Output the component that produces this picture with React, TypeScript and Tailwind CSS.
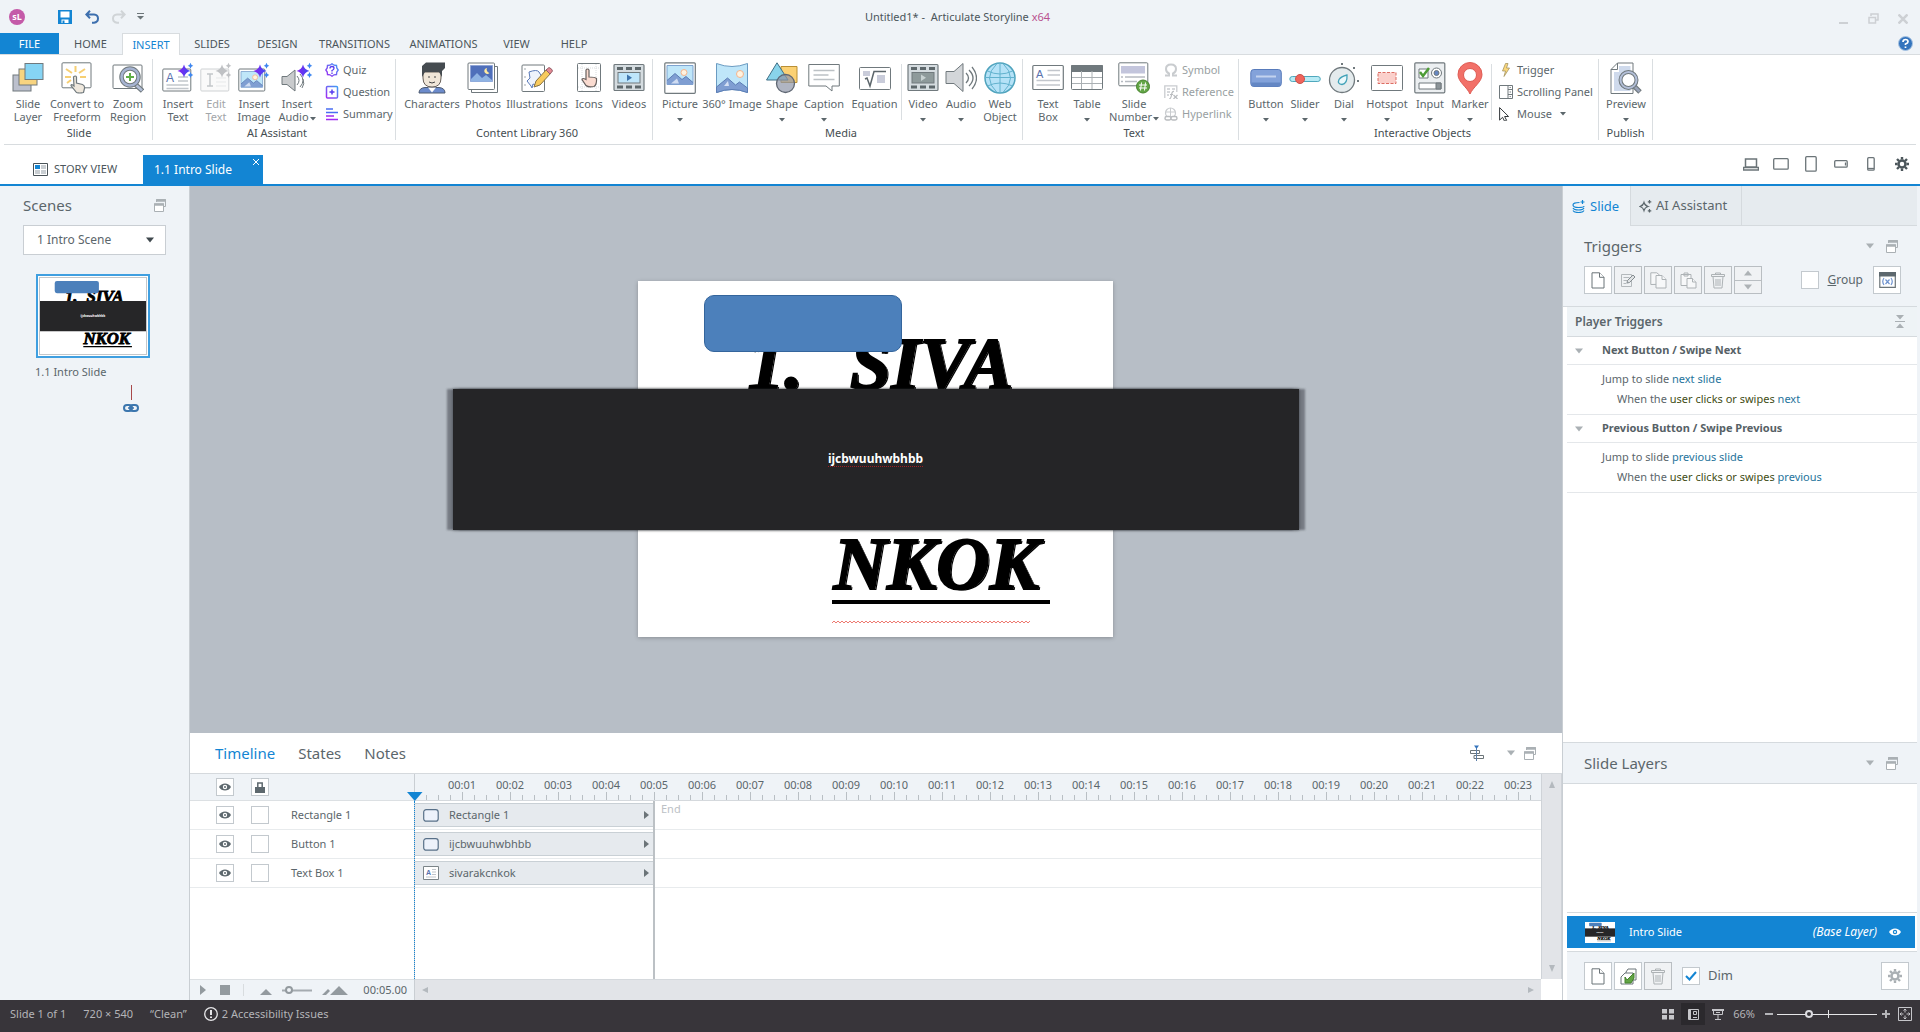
import type { ReactNode } from 'react';
import clsx from 'clsx';

type Tool = { label: string; label2?: string; w: string; icon: ReactNode; menu?: boolean; disabled?: boolean };
type SmallTool = { label: string; icon: ReactNode; menu?: boolean; disabled?: boolean };

const G = '#70797d';

/* ---------- shared glyphs ---------- */

const Caret = ({ className = '' }: { className?: string }) => (
  <svg className={className} width="6" height="4" viewBox="0 0 6 4"><path d="M0 0h6L3 3.6z" fill="currentColor" /></svg>
);

const Arrow = ({ className = '' }: { className?: string }) => (
  <svg className={className} width="8" height="6" viewBox="0 0 8 6"><path d="M0 .5h8L4 5.5z" fill="currentColor" /></svg>
);

const Undock = () => (
  <svg width="12" height="13" viewBox="0 0 12 13" fill="none" stroke="#aab0b4">
    <path d="M2.500 3V.5h9v7H10" />
    <path d="M2 1.500h10" strokeWidth="2.500" />
    <path d="M.5 5h9v7.500h-9z" fill="#fff" />
    <path d="M0 5.500h10" strokeWidth="2.500" />
  </svg>
);

const Eye = ({ color = '#5d686e', pupil = '#fff' }: { color?: string; pupil?: string }) => (
  <svg width="12" height="8" viewBox="0 0 12 8">
    <path d="M0 4C2.500-.8 9.500-.8 12 4 9.500 8.800 2.500 8.800 0 4z" fill={color} />
    <circle cx="6" cy="4" r="2.200" fill={pupil} />
    <circle cx="6" cy="4" r="1" fill={color} />
  </svg>
);

const Page = () => (
  <svg width="14" height="17" viewBox="0 0 14 17" fill="#fff" stroke="#6b7478">
    <path d="M1 .8h7.500L13 5.300V16H1z" /><path d="M8.500.8v4.500H13" />
  </svg>
);

const Trash = () => (
  <svg width="14" height="17" viewBox="0 0 14 17" fill="none" stroke="#adb2b5">
    <path d="M4.500 2.500V1h5v1.500M.5 2.500h13v2H.5zM2 4.500L3 16h8l1-11.500" />
    <path d="M5 7v7M7 7v7M9 7v7" />
  </svg>
);

const Spark = ({ muted = false }: { muted?: boolean }) => (
  <g fill={muted ? '#bfc1c4' : 'url(#aiGrad)'} stroke="none">
    <path d="M22 2.500q1.300 5.200 6.500 6.500-5.200 1.200-6.500 6.500-1.300-5.300-6.500-6.500 5.200-1.300 6.500-6.500z" />
    <path d="M28.500.8q.5 2.500 2.800 3-2.300.5-2.800 3-.5-2.500-2.800-3 2.300-.5 2.800-3z" fill={muted ? undefined : '#3d86f0'} />
    <path d="M28.500 10q.5 2.500 2.800 3-2.300.5-2.800 3-.5-2.500-2.800-3 2.300-.5 2.800-3z" fill={muted ? undefined : '#3d86f0'} />
  </g>
);

const Landscape = () => (
  <>
    <path d="M0 0h26v19H0z" fill="#bfe6f9" stroke="#7fa3cf" />
    <circle cx="17" cy="7" r="3" fill="#fff3e0" stroke="#f5b48c" />
    <path d="M0 15l8-7 7 6 4-3 7 6v2H0z" fill="#7f9ed2" stroke="none" />
    <path d="M4 18l6-5 2 5z" fill="#cfdcf2" stroke="none" />
    <path d="M0 15l8-7 7 6 4-3 7 6" fill="none" stroke="#5c7db5" />
  </>
);

const Icon = ({ children }: { children: ReactNode }) => (
  <svg width="32" height="32" viewBox="0 0 32 32" fill="none" stroke={G} className="shrink-0">{children}</svg>
);

const Film = ({ screen, play }: { screen: string; play: string }) => (
  <Icon>
    <rect x="1" y="2.500" width="30" height="26" rx="1" fill="#d5dce0" strokeWidth="1.200" />
    <path d="M4 6.500h6M13 6.500h6M22 6.500h6M4 25h6M13 25h6M22 25h6" stroke="#5e686c" strokeWidth="3" />
    <rect x="5" y="10.500" width="22" height="10.500" fill={screen} />
    <path d="M14 12.500l5 3.200-5 3.200z" fill={play} stroke="none" />
  </Icon>
);

/* ---------- ribbon icons ---------- */

const icons = {
  slideLayer: (
    <Icon>
      <rect x="1" y="13" width="18" height="16" fill="#bcc0cd" />
      <rect x="7" y="7" width="18" height="16" fill="#f8d480" />
      <rect x="13" y="1.500" width="18" height="16" fill="#86d4f4" />
    </Icon>
  ),
  freeform: (
    <Icon>
      <rect x="1" y=".8" width="29" height="25" rx="1" fill="#fff" />
      <path d="M14.500 4v6M5 7l6 4M24 7l-6 4M4 15h6M25 15h-6M6 21l4-3" stroke="#f6cf73" strokeWidth="2" />
      <path d="M12.500 15q2-2 3 0v6l6 1.500q2.500 1 2 4l-1 4q-4 1-7 0l-5.500-7q0-2 3 .5z" fill="#efe8dd" strokeWidth="1.200" />
    </Icon>
  ),
  zoom: (
    <Icon>
      <rect x="1" y="3" width="29" height="23.500" rx="1" fill="#fff" />
      <path d="M23.500 22.500l7 6.500" strokeWidth="5" /><path d="M24 23l6 5.500" stroke="#b3bfd8" strokeWidth="2.500" />
      <circle cx="18" cy="15" r="8.500" fill="#fff" stroke={G} strokeWidth="4.500" />
      <circle cx="18" cy="15" r="8.500" stroke="#a6b4d2" strokeWidth="2.500" />
      <path d="M18 11v8M14 15h8" stroke="#5fae46" strokeWidth="2" />
    </Icon>
  ),
  insertText: (
    <Icon>
      <rect x=".8" y="7" width="28" height="22" rx="1" fill="#fff" />
      <path d="M16 15h10M16 19h10M4.500 23h22M4.500 26.500h22" stroke="#c2c7cc" strokeWidth="1.500" />
      <text x="4" y="20" fontFamily="Liberation Sans" fontSize="12" fill="#5a72ad" stroke="none">A</text>
      <Spark />
    </Icon>
  ),
  editText: (
    <Icon>
      <rect x=".8" y="7" width="28" height="22" rx="1" fill="#fafafa" stroke="#cfd2d4" />
      <path d="M7 12h6M7 24h6M10 12v12" stroke="#c4c7ca" strokeWidth="1.500" />
      <path d="M16 16h10M16 20h10M16 24h10" stroke="#e7e9ea" />
      <Spark muted />
    </Icon>
  ),
  insertImage: (
    <Icon>
      <rect x=".8" y="7" width="26" height="22" rx="1" fill="#fff" />
      <g transform="translate(3 9.500) scale(.83)"><Landscape /></g>
      <Spark />
    </Icon>
  ),
  insertAudio: (
    <Icon>
      <path d="M1 14.500h5l8-6.500v21l-8-6.500H1z" fill="#c9cbcd" />
      <path d="M16 14q4 4.500 0 9M19 12q6 6.500 0 13M22 17q2 5-1 9" />
      <Spark />
    </Icon>
  ),
  character: (
    <Icon>
      <path d="M3 31q0-5 6-5.500h14q6 .5 6 5.500z" fill="#6c8bcb" stroke="#4d5a70" />
      <path d="M12 25.500l4 5 4-5z" fill="#fff" stroke="none" />
      <path d="M7 10h18v6q0 9-9 9t-9-9z" fill="#f0e6d8" stroke="#665e58" />
      <path d="M6 15V4l4-3.500h19V6l-3 3v6l-3-5H9z" fill="#454b50" stroke="none" />
      <path d="M12 15h2M18 15h2M13 20q3 2 6 0" stroke="#444" />
    </Icon>
  ),
  photos: (
    <Icon>
      <path d="M4.500 26.500v4h26v-26h-3" fill="#fff" />
      <rect x="1" y="1" width="26.500" height="26.500" rx="1" fill="#fff" />
      <path d="M3.500 3.500h22v16h-22z" fill="#4f6fba" stroke="#8fa4d6" />
      <path d="M4 17l6-6 5 5 4-3 6 5v1.500H4z" fill="#8fb3e3" stroke="none" />
      <path d="M20 6a3 3 0 1 0 2.500 5A3.500 3.500 0 0 1 20 6z" fill="#ffeaa0" stroke="none" />
    </Icon>
  ),
  illustrations: (
    <Icon>
      <rect x="1" y="3" width="22.500" height="26.500" rx="1" fill="#fff" />
      <path d="M3 7h2M3 15h2M3 23h2" stroke="#a0a7ab" />
      <path d="M10 24l-4-5 3-3-1-6q8-3 10 0l3 5-4 9-5-2-1 4z" fill="#eef3fc" stroke="#5a7ab8" />
      <path d="M13 25l2-6L26 7l4 4-11 12z" fill="#f8ca5c" stroke="#8b7444" />
      <path d="M25 8l3-2.500q3 1 3.500 3.500L29 12z" fill="#e58a94" stroke="#96606a" />
    </Icon>
  ),
  hand: (
    <Icon>
      <rect x="4.500" y="1.500" width="23" height="28" rx="1" fill="#fff" />
      <path d="M9 2v27M23 2v27M5 6h22M5 25h22" stroke="#d9dcde" strokeDasharray="1 1" />
      <path d="M13 8q1.500-2 3 0v7q6 0 7.500 1.500.5 6-2.500 8-6 1-8-1l-4-6q0-2 4 0z" fill="#fadbd0" stroke="#67605e" strokeWidth="1.200" />
    </Icon>
  ),
  videos: <Film screen="#bfe6fb" play="#3e74ad" />,
  picture: (
    <Icon>
      <rect x=".8" y=".8" width="30.500" height="30.500" rx="1" fill="#fff" strokeWidth="1.200" />
      <g transform="translate(3 3.500)"><Landscape /></g>
    </Icon>
  ),
  panorama: (
    <Icon>
      <path d="M.5 1.500q15.500 6 31 0v29q-15.500-6-31 0z" fill="#bfe6f9" stroke="#6a9bc2" />
      <circle cx="24" cy="12" r="3.500" fill="#fff3e0" stroke="#f5b48c" />
      <path d="M.5 25l11-9 8 7 4-3 8 6v4.500q-15.500-6-31 0z" fill="#7f9ed2" stroke="#5c7db5" />
      <path d="M8 24l4-5 1 5z" fill="#d4e0f4" stroke="none" />
    </Icon>
  ),
  shape: (
    <Icon>
      <path d="M15 4.500h16v16H15z" fill="#fbd173" stroke="#b98f35" />
      <path d="M11 .8L22 18H.5z" fill="#7ccfe9" fillOpacity=".9" stroke="#3f6f86" />
      <circle cx="19.500" cy="21.500" r="9" fill="#8e96a8" fillOpacity=".7" stroke="#5e6672" strokeWidth="1.300" />
    </Icon>
  ),
  caption: (
    <Icon>
      <path d="M.8 2.500h30.500V24H24v5l-6-5H.8z" fill="#fff" />
      <path d="M5.500 8.500h21M5.500 13h15M5.500 17.500h21" stroke="#bcc1c5" strokeWidth="1.500" />
    </Icon>
  ),
  equation: (
    <Icon>
      <rect x=".5" y="5.500" width="31" height="22" rx="1" fill="#fff" />
      <path d="M4 9h7v5H4zM18 13h8v8h-8z" fill="#c9ccda" stroke="none" />
      <path d="M6 17l2-1 3 8 4-14.500h12" stroke="#5c666b" strokeWidth="1.500" />
    </Icon>
  ),
  video: <Film screen="#8e9a9b" play="#c8d2d2" />,
  audio: (
    <Icon>
      <path d="M1 9.500h8L18 1.500v28L9 21.500H1z" fill="#d3d6d9" />
      <path d="M21 11q5 5 0 10M24 8q8 8 0 16M27 5q9 11 0 22" strokeWidth="1.300" />
    </Icon>
  ),
  web: (
    <Icon>
      <circle cx="16" cy="16" r="15" fill="#b5e2f7" stroke="#4fa3bd" strokeWidth="1.500" />
      <path d="M16 1v30M1 15.500h30M3.500 9q12.500 6 25 0M3.500 24q12.500-6 25 0M13 1.500Q-2 16 13 30.500M19 1.500Q34 16 19 30.500" stroke="#62b2ce" />
    </Icon>
  ),
  textBox: (
    <Icon>
      <rect x=".8" y="3.500" width="30.500" height="24" rx="1" fill="#fff" strokeWidth="1.200" />
      <path d="M15.500 8.500H28M15.500 13H28M4.500 18.500H28M4.500 23H28" stroke="#c2c6cc" strokeWidth="1.500" />
      <text x="4" y="15.500" fontFamily="Liberation Sans" fontSize="11" fill="#5a72ad" stroke="none">A</text>
    </Icon>
  ),
  table: (
    <Icon>
      <rect x=".5" y="3.500" width="31" height="24" rx="1" fill="#fff" />
      <path d="M.5 3.500h31v6H.5z" fill={G} />
      <path d="M10.500 9v18M21 9v18M1 15.500h30M1 21.500h30" stroke="#aab0b3" />
    </Icon>
  ),
  slideNumber: (
    <Icon>
      <rect x=".8" y=".8" width="29" height="23" rx="1" fill="#fff" />
      <path d="M3 4h24v7.500H3z" fill="#c3c5dc" stroke="none" />
      <path d="M3 15h2M7 15h20M3 19.500h2M7 19.500h12" stroke="#b6bbc1" strokeWidth="1.500" />
      <circle cx="25" cy="24.500" r="6.500" fill="#62a545" stroke="#45822c" />
      <path d="M23.500 20.500l-1 8M27.500 20.500l-1 8M21 23h8M21 26h8" stroke="#fff" />
    </Icon>
  ),
  button: (
    <Icon>
      <rect x=".8" y="7.500" width="30.500" height="17" rx="3" fill="#83a2da" stroke="#587bbb" />
      <path d="M1.500 20.500h29v2q0 2-2 2h-25q-2 0-2-2z" fill="#6487c4" stroke="none" />
      <path d="M6 14.500h20" stroke="#c3d3ef" strokeWidth="2" />
    </Icon>
  ),
  slider: (
    <Icon>
      <rect x=".8" y="14.500" width="30.500" height="5" rx="2.500" fill="#b8ebf5" stroke="#4fa8bd" />
      <circle cx="11" cy="17" r="4.500" fill="#f0645c" stroke="#c9534c" />
    </Icon>
  ),
  dial: (
    <Icon>
      <circle cx="14" cy="18" r="12.500" fill="#e4ebed" strokeWidth="1.300" />
      <path d="M19 13q.5 9-5 9.500-5-.5-3-5 2-3 8-4.500z" fill="#e9f8fb" stroke="#41a2b8" strokeWidth="1.300" />
      <path d="M13 1h2v2h-2zM25 5h2v2h-2zM29 18h2v2h-2z" fill={G} stroke="none" />
    </Icon>
  ),
  hotspot: (
    <Icon>
      <rect x=".5" y="3.500" width="31" height="25" rx="1" fill="#fff" />
      <path d="M7 10.500h18v11H7z" fill="#fbd0cb" stroke="#dc6d63" strokeDasharray="3 1.500" />
    </Icon>
  ),
  input: (
    <Icon>
      <rect x=".8" y=".8" width="30" height="30" rx="1" fill="#eceff1" strokeWidth="1.200" />
      <path d="M5 7h9v9H5zM5 21h22v6H5z" fill="#fff" />
      <path d="M22 21h5v6h-5z" fill="#8d9599" />
      <path d="M6 10l3 4 6-8" stroke="#4d9c35" strokeWidth="2.500" />
      <circle cx="22.500" cy="11" r="5" fill="#fff" /><circle cx="22.500" cy="11" r="2.500" fill="#6787c2" />
    </Icon>
  ),
  marker: (
    <Icon>
      <path d="M16 32C13 25 4 20 4 12.500a12 12 0 0 1 24 0C28 20 19 25 16 32z" fill="#f27068" stroke="#de5b53" />
      <circle cx="16" cy="13" r="6.500" fill="#fff" stroke="#de5b53" />
    </Icon>
  ),
  preview: (
    <Icon>
      <path d="M1 7.500L7.500 1H23v30.500H1z" fill="#fff" />
      <path d="M4 10h5V4h11.500v25H4z" fill="#cfdaec" stroke="none" />
      <path d="M1 7.500h6.500V1" />
      <path d="M24 24l6 6" strokeWidth="5" /><path d="M24.500 24.500l5 5" stroke="#9aa3b8" strokeWidth="2.500" />
      <circle cx="18.500" cy="18" r="8" fill="#fff" strokeWidth="4" />
      <circle cx="18.500" cy="18" r="8" stroke="#b3bfd8" strokeWidth="2" />
    </Icon>
  ),
};

const Mini = ({ children }: { children: ReactNode }) => (
  <svg width="14" height="14" viewBox="0 0 14 14" fill="none" stroke={G} className="shrink-0">{children}</svg>
);

const mini = {
  quiz: (
    <Mini>
      <path d="M7 .8l2 1.400 2.500.3.300 2.500L13.200 7l-1.400 2-.3 2.500-2.500.3-2 1.400-2-1.400-2.500-.3-.3-2.500L.8 7l1.400-2 .3-2.500L5 2.200z" stroke="url(#aiGradLine)" strokeWidth="1.400" />
      <path d="M5 5.500q0-2 2-2t2 1.700Q9 6.500 7 7.500v1M7 9.500V11" stroke="#5a3cf0" strokeWidth="1.300" />
    </Mini>
  ),
  question: (
    <Mini>
      <rect x="1.500" y="1.500" width="11" height="11.500" rx="1" stroke="url(#aiGradLine)" strokeWidth="1.500" />
      <path d="M7 4.500v5M4.500 7h5" stroke="#5a3cf0" strokeWidth="1.500" />
    </Mini>
  ),
  summary: (
    <Mini>
      <path d="M1 2h7M1 5.500h12" stroke="#4a6df2" strokeWidth="1.600" />
      <path d="M1 9h8M1 12.500h12" stroke="#a02af2" strokeWidth="1.600" />
    </Mini>
  ),
  symbol: (
    <Mini><path d="M1 12.500h4v-2Q2 9 2 6q0-4.500 5-4.500T12 6q0 3-3 4.500v2h4" stroke="#c9cccf" strokeWidth="2" /></Mini>
  ),
  reference: (
    <Mini>
      <path d="M.8 13V.8h12V7M3 4h3M3 7h3M3 10h2M8 4h3" stroke="#c9cccf" strokeWidth="1.300" />
      <path d="M5 14q2 0 2.500-4T10 6.500M6 9.500h3M9.500 10l4 4M13.500 10l-4 4" stroke="#b9bcbf" strokeWidth="1.200" />
    </Mini>
  ),
  hyperlink: (
    <Mini>
      <circle cx="6.500" cy="6" r="5" stroke="#c9cccf" strokeWidth="1.200" /><path d="M6.500 1v8M1.500 5h10" stroke="#c9cccf" />
      <rect x="1" y="9.500" width="6" height="3.500" rx="1.700" fill="#fff" stroke="#b9bcbf" strokeWidth="1.400" />
      <rect x="7" y="9.500" width="6" height="3.500" rx="1.700" fill="#fff" stroke="#b9bcbf" strokeWidth="1.400" />
    </Mini>
  ),
  trigger: <Mini><path d="M6.500.5h2.500L7.500 5h3L5 13.500 6.500 8H3.500z" fill="#fbd77a" stroke="#a59562" strokeWidth=".8" /></Mini>,
  scroll: (
    <Mini>
      <path d="M.5.5h13v13H.5zM9 .5v13M9 4.500h4M9 9.500h4" />
      <path d="M10.200 3l1-1.200 1 1.200zM10.200 11l1 1.200 1-1.200z" fill={G} stroke="none" />
      <path d="M10.500 7h1.500" />
    </Mini>
  ),
  mouse: <Mini><path d="M.6.600v12.500l3-2.800 2 4 2-1-2-3.800h4z" fill="#fff" stroke="#33383b" /></Mini>,
};

/* ---------- ribbon ---------- */

const RibbonButton = ({ label, label2, w, icon, menu, disabled }: Tool) => (
  <button
    className={clsx('flex h-full shrink-0 flex-col items-center pt-[7px]', w, disabled ? 'text-[#a2a6a9]' : 'text-[#5b666b]')}
    disabled={disabled}
  >
    {icon}
    <span className="mt-[3px] flex flex-col items-center whitespace-nowrap text-[11px] leading-[13px]">
      <span>{label}</span>
      {label2 ? (
        <span className="flex items-center gap-px">
          {label2}
          {menu && <Caret className="mt-1" />}
        </span>
      ) : (
        menu && <Caret className="mt-2" />
      )}
    </span>
  </button>
);

const SmallList = ({ items, pad }: { items: SmallTool[]; pad: string }) => (
  <div className={clsx('flex flex-col pt-1', pad)}>
    {items.map((it) => (
      <button
        key={it.label}
        disabled={it.disabled}
        className={clsx('flex h-[22px] items-center gap-1 whitespace-nowrap text-[11px]', it.disabled ? 'text-[#999fa2]' : 'text-[#5b666b]')}
      >
        {it.icon}
        {it.label}
        {it.menu && <Caret className="ml-1" />}
      </button>
    ))}
  </div>
);

const Group = ({ title, w, children }: { title: string; w: string; children: ReactNode }) => (
  <section className={clsx('my-1 flex shrink-0 flex-col border-r border-[#dadee1]', w)}>
    <div className="-mt-1 flex h-[72px]">{children}</div>
    <h2 className="text-center text-[11px] leading-[14px] text-[#454d51]">{title}</h2>
  </section>
);

const Buttons = ({ items }: { items: Tool[] }) => (
  <>{items.map((t) => <RibbonButton key={t.label + t.label2} {...t} />)}</>
);

const InnerRule = () => <div className="mt-[9px] h-[56px] w-px shrink-0 bg-[#dadee1]" />;

const slideTools: Tool[] = [
  { label: 'Slide', label2: 'Layer', w: 'w-[44px]', icon: icons.slideLayer },
  { label: 'Convert to', label2: 'Freeform', w: 'w-[54px]', icon: icons.freeform },
  { label: 'Zoom', label2: 'Region', w: 'w-[48px]', icon: icons.zoom },
];
const aiTools: Tool[] = [
  { label: 'Insert', label2: 'Text', w: 'w-[38px]', icon: icons.insertText },
  { label: 'Edit', label2: 'Text', w: 'w-[38px]', icon: icons.editText, disabled: true },
  { label: 'Insert', label2: 'Image', w: 'w-[38px]', icon: icons.insertImage },
  { label: 'Insert', label2: 'Audio', w: 'w-[48px]', icon: icons.insertAudio, menu: true },
];
const libraryTools: Tool[] = [
  { label: 'Characters', w: 'w-[60px]', icon: icons.character },
  { label: 'Photos', w: 'w-[42px]', icon: icons.photos },
  { label: 'Illustrations', w: 'w-[66px]', icon: icons.illustrations },
  { label: 'Icons', w: 'w-[38px]', icon: icons.hand },
  { label: 'Videos', w: 'w-[42px]', icon: icons.videos },
];
const mediaTools: Tool[] = [
  { label: 'Picture', w: 'w-[40px]', icon: icons.picture, menu: true },
  { label: '360° Image', w: 'w-[64px]', icon: icons.panorama },
  { label: 'Shape', w: 'w-[36px]', icon: icons.shape, menu: true },
  { label: 'Caption', w: 'w-[48px]', icon: icons.caption, menu: true },
  { label: 'Equation', w: 'w-[53px]', icon: icons.equation },
];
const avTools: Tool[] = [
  { label: 'Video', w: 'w-[42px]', icon: icons.video, menu: true },
  { label: 'Audio', w: 'w-[34px]', icon: icons.audio, menu: true },
  { label: 'Web', label2: 'Object', w: 'w-[44px]', icon: icons.web },
];
const textTools: Tool[] = [
  { label: 'Text', label2: 'Box', w: 'w-[36px]', icon: icons.textBox },
  { label: 'Table', w: 'w-[42px]', icon: icons.table, menu: true },
  { label: 'Slide', label2: 'Number', w: 'w-[52px]', icon: icons.slideNumber, menu: true },
];
const objectTools: Tool[] = [
  { label: 'Button', w: 'w-[38px]', icon: icons.button, menu: true },
  { label: 'Slider', w: 'w-[40px]', icon: icons.slider, menu: true },
  { label: 'Dial', w: 'w-[38px]', icon: icons.dial, menu: true },
  { label: 'Hotspot', w: 'w-[48px]', icon: icons.hotspot, menu: true },
  { label: 'Input', w: 'w-[38px]', icon: icons.input, menu: true },
  { label: 'Marker', w: 'w-[42px]', icon: icons.marker, menu: true },
];

const Ribbon = () => (
  <div className="mx-1 flex h-[90px] shrink-0 overflow-hidden border-b border-[#d8dcdf] bg-white">
    <Group title="Slide" w="w-[149px] pl-[2px]"><Buttons items={slideTools} /></Group>
    <Group title="AI Assistant" w="w-[243px] pl-[6px]">
      <Buttons items={aiTools} />
      <SmallList pad="pl-1" items={[
        { label: 'Quiz', icon: mini.quiz },
        { label: 'Question', icon: mini.question },
        { label: 'Summary', icon: mini.summary },
      ]} />
    </Group>
    <Group title="Content Library 360" w="w-[257px] pl-[6px]"><Buttons items={libraryTools} /></Group>
    <Group title="Media" w="w-[370px] pl-[7px]">
      <Buttons items={mediaTools} />
      <InnerRule />
      <Buttons items={avTools} />
    </Group>
    <Group title="Text" w="w-[216px] pl-[7px]">
      <Buttons items={textTools} />
      <SmallList pad="pl-1" items={[
        { label: 'Symbol', icon: mini.symbol, disabled: true },
        { label: 'Reference', icon: mini.reference, disabled: true },
        { label: 'Hyperlink', icon: mini.hyperlink, disabled: true },
      ]} />
    </Group>
    <Group title="Interactive Objects" w="w-[360px] pl-[8px]">
      <Buttons items={objectTools} />
      <InnerRule />
      <SmallList pad="pl-[7px]" items={[
        { label: 'Trigger', icon: mini.trigger },
        { label: 'Scrolling Panel', icon: mini.scroll },
        { label: 'Mouse', icon: mini.mouse, menu: true },
      ]} />
    </Group>
    <Group title="Publish" w="w-[54px]">
      <Buttons items={[{ label: 'Preview', w: 'w-[54px]', icon: icons.preview, menu: true }]} />
    </Group>
  </div>
);

const menuTabs = [
  { label: 'FILE', w: 'w-[59px]' },
  { label: 'HOME', w: 'w-[63px]' },
  { label: 'INSERT', w: 'w-[58px]' },
  { label: 'SLIDES', w: 'w-[64px]' },
  { label: 'DESIGN', w: 'w-[67px]' },
  { label: 'TRANSITIONS', w: 'w-[87px]' },
  { label: 'ANIMATIONS', w: 'w-[91px]' },
  { label: 'VIEW', w: 'w-[55px]' },
  { label: 'HELP', w: 'w-[60px]' },
];

const TitleBar = () => (
  <header className="grid h-[33px] shrink-0 grid-cols-3 items-center">
    <div className="flex items-center pl-[9px]">
      <span className="flex size-4 items-center justify-center rounded-full bg-[#c45aa8] text-[9px] font-bold leading-none text-white">sL</span>
      <button aria-label="Save" className="ml-[33px]">
        <svg width="14" height="14" viewBox="0 0 14 14"><path d="M0 0h14v14H0z" fill="#1385d3" /><path d="M2.500 1.500h9v6h-9zM3.500 9.500h7V13h-7z" fill="#fff" /><path d="M4.500 10.500h2V13h-2z" fill="#1385d3" /></svg>
      </button>
      <button aria-label="Undo" className="ml-[13px]">
        <svg width="14" height="14" viewBox="0 0 14 14" fill="none" stroke="#3d6fae" strokeWidth="2"><path d="M5 .8L1.300 4.500 5 8.200M1.500 4.500H9q4 .3 4 4t-4 4.200H7" /></svg>
      </button>
      <button aria-label="Redo" className="ml-[13px]">
        <svg width="14" height="14" viewBox="0 0 14 14" fill="none" stroke="#d0d4d7" strokeWidth="2"><path d="M9 .8l3.700 3.700L9 8.200M12.500 4.500H5q-4 .3-4 4t4 4.200h2" /></svg>
      </button>
      <button aria-label="Customize" className="ml-[11px] text-[#6b7478]">
        <svg width="7" height="7" viewBox="0 0 7 7"><path d="M0 0h7v1H0zM0 3h7L3.500 6.500z" fill="currentColor" /></svg>
      </button>
    </div>
    <h1 className="pr-[5px] pt-px text-center text-[11px] text-[#4c565b]">Untitled1* -&nbsp; Articulate Storyline <span className="text-[#b9518f]">x64</span></h1>
    <div className="flex items-center justify-end gap-[19px] pr-3 pt-1 text-[#cdd0d4]">
      <button aria-label="Minimize"><svg width="10" height="10"><path d="M0 8h9v2H0z" fill="currentColor" /></svg></button>
      <button aria-label="Restore"><svg width="11" height="11" fill="none" stroke="currentColor" strokeWidth="1.500"><path d="M3 3V1h7v6H8M1 4.500h6.500V10H1z" /></svg></button>
      <button aria-label="Close"><svg width="10" height="10" stroke="currentColor" strokeWidth="2.500"><path d="M.5.5l9 9M9.500.5l-9 9" /></svg></button>
    </div>
  </header>
);

const MenuBar = () => (
  <nav className="flex h-[22px] shrink-0 border-b border-[#d8dcdf] text-[11px]">
    {menuTabs.map((t) => (
      <button
        key={t.label}
        className={clsx(
          'shrink-0 pt-px',
          t.w,
          t.label === 'FILE' && 'bg-[#1385d3] text-white',
          t.label === 'INSERT' && '-mb-px border-x border-t border-[#d8dcdf] bg-white text-[#1385d3]',
          t.label !== 'FILE' && t.label !== 'INSERT' && 'text-[#4c565b]',
        )}
      >
        {t.label}
      </button>
    ))}
    <button aria-label="Help" className="ml-auto mr-[7px]">
      <svg width="15" height="15" viewBox="0 0 15 15"><circle cx="7.500" cy="7.500" r="7" fill="#3474bd" stroke="#a9c4e2" /><path d="M5 6q0-2.500 2.500-2.500T10 5.700Q10 7 7.500 8v1M7.500 10.500v1.500" fill="none" stroke="#fff" strokeWidth="1.700" /></svg>
    </button>
  </nav>
);

const Cog = ({ color, size }: { color: string; size: number }) => (
  <svg width={size} height={size} viewBox="0 0 14 14" fill="none" stroke={color}>
    <circle cx="7" cy="7" r="3.500" strokeWidth="2.500" />
    <path d="M7 0v2.500M7 11.500V14M0 7h2.500M11.500 7H14M2 2l2 2M10 10l2 2M12 2l-2 2M4 10l-2 2" strokeWidth="2.400" />
  </svg>
);

const DocTabs = () => (
  <div className="flex h-[41px] shrink-0 items-end border-b-2 border-[#1385d3] bg-white">
    <button className="flex h-[29px] w-[143px] items-center gap-[6px] pl-[33px] text-[11px] text-[#4c565b]">
      <svg width="15" height="13" viewBox="0 0 15 13"><path d="M.5.500h14v12H.5z" fill="#fff" stroke="#4a5358" /><path d="M2 2h5v4H2z" fill="#1385d3" /><path d="M8 2h5v4H8zM2 7h5v4H2zM8 7h5v4H8z" fill="#c9ced2" /></svg>
      STORY VIEW
    </button>
    <div className="flex h-[29px] w-[120px] bg-[#1385d3] text-white">
      <button className="pl-[11px] pt-px text-[12px]">1.1 Intro Slide</button>
      <button aria-label="Close tab" className="ml-auto mr-1 mt-1 self-start">
        <svg width="6" height="6" stroke="#fff"><path d="M0 0l6 6M6 0L0 6" /></svg>
      </button>
    </div>
    <div className="ml-auto mr-[11px] flex h-10 items-center text-[#6b7478]">
      <button aria-label="Desktop"><svg width="16" height="13" fill="none" stroke="currentColor" strokeWidth="1.500"><path d="M2.500 1h11v8h-11zM.5 9.500h15V12H.5z" /></svg></button>
      <button aria-label="Tablet landscape" className="ml-[14px]"><svg width="16" height="12" fill="none" stroke="currentColor" strokeWidth="1.300"><rect x=".7" y=".7" width="14.500" height="10.500" rx="1" /></svg></button>
      <button aria-label="Tablet portrait" className="ml-4"><svg width="12" height="16" fill="none" stroke="currentColor" strokeWidth="1.300"><rect x=".7" y=".7" width="10.500" height="14.500" rx="1" /></svg></button>
      <button aria-label="Phone landscape" className="ml-[17px]"><svg width="14" height="8" fill="none" stroke="currentColor" strokeWidth="1.300"><rect x=".7" y=".7" width="12.500" height="6.500" rx="1" /><path d="M11.500 2.500v3" /></svg></button>
      <button aria-label="Phone portrait" className="ml-[19px]"><svg width="8" height="14" fill="none" stroke="currentColor" strokeWidth="1.300"><rect x=".7" y=".7" width="6.500" height="12.500" rx="1" /><path d="M1 11.500h6" /></svg></button>
      <button aria-label="Player settings" className="ml-5"><Cog color="#4c565b" size={14} /></button>
    </div>
  </div>
);

/* ---------- slide ---------- */

const SlideThumb = ({ className }: { className: string }) => (
  <svg className={className} viewBox="0 0 475 356" preserveAspectRatio="none">
    <path d="M0 0h475v356H0z" fill="#fff" />
    <g fontFamily="Liberation Serif" fontWeight="700" fontStyle="italic" fontSize="75" stroke="#000" strokeWidth="4">
      <text x="112" y="112">1.</text>
      <text x="209" y="112">SIVA</text>
      <text x="195" y="310">NKOK</text>
    </g>
    <path d="M194 319h218v5H194z" />
    <rect x="66" y="14" width="198" height="57" rx="10" fill="#4c80bb" />
    <path d="M0 108h475v141H0z" fill="#262628" />
    <text x="237" y="184" textAnchor="middle" fontFamily="Noto Sans" fontWeight="700" fontSize="14" fill="#fff">ijcbwuuhwbhbb</text>
  </svg>
);

const display = "font-['Liberation_Serif',serif] text-[74px] font-bold italic leading-[76px] text-black [-webkit-text-stroke:2px_#000] [text-shadow:1px_0_#ccc,2px_1px_#000]";

const Canvas = () => (
  <main className="flex flex-1 items-center justify-center overflow-hidden bg-[#b7bec6] pb-[2px] pr-[2px]">
    <div className="relative h-[356px] w-[475px] bg-white shadow-[0_1px_4px_rgba(0,0,0,0.25)]">
      <div className={clsx('absolute left-[110px] top-[45px] flex gap-[47px]', display)}>
        <span>1.</span>
        <span>SIVA</span>
      </div>
      <div className={clsx('absolute left-[196px] top-[245px]', display)}>NKOK</div>
      <div className="absolute left-[194px] top-[319px] h-1 w-[218px] bg-black" />
      <svg className="absolute left-[194px] top-[339px]" width="198" height="4">
        <defs><pattern id="wave" width="4" height="4" patternUnits="userSpaceOnUse"><path d="M0 3l2-2 2 2" fill="none" stroke="#e8584c" strokeWidth=".8" /></pattern></defs>
        <rect width="198" height="4" fill="url(#wave)" />
      </svg>
      <div className="absolute left-[66px] top-[14px] h-[57px] w-[198px] rounded-[10px] border border-[#34659c] bg-[#4c80bb]" />
      <div className="absolute left-[-185px] top-[108px] flex h-[141px] w-[846px] items-center justify-center bg-[#252527] shadow-[6px_0_2px_rgba(40,42,50,0.45),-6px_0_2px_rgba(40,42,50,0.45),0_0_3px_rgba(0,0,0,0.5)]">
        <span className="border-b border-dotted border-[#a02024] text-[12px] font-bold leading-[14px] text-white">ijcbwuuhwbhbb</span>
      </div>
    </div>
  </main>
);

const Scenes = () => (
  <aside className="flex w-[190px] shrink-0 flex-col border-r border-[#c9ced3] bg-[#eff3f7] px-[23px]">
    <div className="mt-[7px] flex h-6 items-center justify-between">
      <h2 className="text-[15px] text-[#5b666b]">Scenes</h2>
      <button aria-label="Undock scenes"><Undock /></button>
    </div>
    <div className="relative mt-2 text-[#3f484d]">
      <select aria-label="Scene" className="h-[30px] w-full appearance-none border border-[#c9ced3] bg-white pl-[13px] text-[12px] text-[#5b666b]">
        <option>1 Intro Scene</option>
      </select>
      <Arrow className="pointer-events-none absolute right-3 top-3" />
    </div>
    <button className="ml-[13px] mt-[19px] h-[84px] w-[114px] border-2 border-[#3f9fe0] bg-white p-px">
      <span className="block size-full border border-[#c4c7ca]"><SlideThumb className="block size-full" /></span>
    </button>
    <p className="ml-3 mt-[6px] text-[11px] text-[#5b666b]">1.1 Intro Slide</p>
    <div className="ml-[100px] mt-[4px] flex w-4 flex-col items-center gap-1">
      <div className="h-[15px] w-px bg-[#a8484a]" />
      <svg width="16" height="8" viewBox="0 0 16 8" fill="none" stroke="#3c76ae" strokeWidth="2">
        <rect x="1" y="1" width="8" height="6" rx="3" />
        <rect x="7" y="1" width="8" height="6" rx="3" />
        <path d="M5 4h2.500M8.500 4H11" strokeWidth="1.500" />
      </svg>
    </div>
  </aside>
);

/* ---------- timeline ---------- */

const ObjectIcon = () => (
  <svg width="16" height="13" viewBox="0 0 16 13"><rect x=".7" y=".7" width="14.500" height="11.500" rx="2.500" fill="#edf2fb" stroke="#587088" strokeWidth="1.200" /></svg>
);
const TextIcon = () => (
  <svg width="16" height="14" viewBox="0 0 16 14"><path d="M.5.500h15v13H.5z" fill="#fff" stroke="#7b8488" /><text x="3" y="9" fontSize="7" fontWeight="700" fontFamily="Liberation Sans" fill="#5a72ad">A</text><path d="M9 3.500h4M9 6h4M9 8.500h4M3 11h10" stroke="#c0c5ca" /></svg>
);

const tracks = [
  { name: 'Rectangle 1', text: 'Rectangle 1', icon: <ObjectIcon /> },
  { name: 'Button 1', text: 'ijcbwuuhwbhbb', icon: <ObjectIcon /> },
  { name: 'Text Box 1', text: 'sivarakcnkok', icon: <TextIcon /> },
];
const seconds = Array.from({ length: 23 }, (_, i) => `00:${String(i + 1).padStart(2, '0')}`);
const box = 'flex size-[18px] shrink-0 items-center justify-center border border-[#c3c9ce] bg-white';

const Timeline = () => (
  <section className="flex h-[267px] shrink-0 flex-col bg-white">
    <div className="flex h-10 shrink-0 items-center gap-[23px] pl-[25px] pr-[26px] text-[15px] text-[#5b666b]">
      <button className="text-[#1385d3]">Timeline</button>
      <button>States</button>
      <button>Notes</button>
      <button aria-label="Align timeline" className="ml-auto">
        <svg width="14" height="17" viewBox="0 0 14 17" fill="none" stroke="#6b7478"><path d="M.5 5.500h9v3h-9zM4 10.500h9.500v3H4z" fill="#fff" /><path d="M6.500 2v14" stroke="#5d7fa8" /><path d="M4 .5h5L6.500 4z" fill="#3474bd" stroke="none" /></svg>
      </button>
      <div className="flex items-center gap-[9px] text-[#aab0b4]">
        <Arrow />
        <button aria-label="Undock timeline"><Undock /></button>
      </div>
    </div>
    <div className="flex min-h-0 flex-1 border-t border-[#d5d9dd]">
      <div className="flex w-[224px] shrink-0 flex-col">
        <div className="flex h-[27px] items-center gap-[17px] border-b border-[#dce0e3] bg-[#eff3f7] pl-[26px]">
          <button aria-label="Show all" className={box}><Eye /></button>
          <button aria-label="Lock all" className={box}>
            <svg width="10" height="11" viewBox="0 0 10 11"><path d="M0 5h10v6H0z" fill="#5d686e" /><path d="M2.800 5V1h4.400v4" fill="none" stroke="#5d686e" strokeWidth="1.500" /></svg>
          </button>
        </div>
        {tracks.map((t) => (
          <div key={t.name} className="flex h-[29px] items-center gap-[17px] border-b border-[#e8ebed] pl-[26px]">
            <button aria-label={`Show ${t.name}`} className={box}><Eye /></button>
            <button aria-label={`Lock ${t.name}`} className={box} />
            <span className="ml-[5px] text-[11px] text-[#5b666b]">{t.name}</span>
          </div>
        ))}
        <div className="mt-auto flex h-[21px] items-center border-t border-[#dce0e3] bg-[#eff3f7] pl-[10px] pr-[7px] text-[11px] text-[#5b666b]">
          <button aria-label="Play"><svg width="6" height="10"><path d="M0 0l6 5-6 5z" fill="#939a9f" /></svg></button>
          <button aria-label="Stop" className="ml-[14px] size-[10px] bg-[#939a9f]" />
          <svg className="ml-[13px]" width="30" height="12"><path d="M.5 0v12" stroke="#d8dcdf" /><path d="M17 11l6-6 6 6z" fill="#939a9f" /></svg>
          <svg className="ml-[9px]" width="30" height="10"><path d="M0 5.500h30" stroke="#a5abb0" strokeWidth="2" /><circle cx="7" cy="5" r="3" fill="#eff3f7" stroke="#939a9f" strokeWidth="2" /></svg>
          <svg className="ml-[10px]" width="26" height="10"><path d="M0 10l6-6 2 2-4 4zM8 10l9-9 9 9z" fill="#939a9f" /></svg>
          <span className="ml-auto">00:05.00</span>
        </div>
      </div>
      <div className="relative flex min-w-0 flex-1 flex-col border-l border-[#c9ced3]">
        <div className="h-[27px] overflow-hidden border-b border-[#d5d9dd] bg-[#eff3f7]">
          <div className="flex pl-[23px] text-[11px] leading-[21px] text-[#5b666b]">
            {seconds.map((s) => <span key={s} className="w-12 shrink-0 text-center">{s}</span>)}
          </div>
          <svg className="-mt-[3px] block" width="100%" height="8">
            <defs>
              <pattern id="ticks" width="48" height="8" x="-1" patternUnits="userSpaceOnUse"><path d="M.5 0v8M12.500 3v5M24.500 3v5M36.500 3v5" stroke="#b9bfc4" /></pattern>
            </defs>
            <rect width="100%" height="8" fill="url(#ticks)" />
          </svg>
        </div>
        {tracks.map((t) => (
          <div key={t.name} className="flex h-[29px] items-center border-b border-[#e8ebed]">
            <button className="flex h-6 w-[239px] items-center gap-[10px] border-y border-[#c9d0d5] bg-[#e6eaee] pl-2 pr-[5px] text-[11px] text-[#5b666b]">
              {t.icon}
              {t.text}
              <svg className="ml-auto" width="5" height="8"><path d="M0 0l5 4-5 4z" fill="#6b7478" /></svg>
            </button>
          </div>
        ))}
        <div className="mt-auto flex h-[21px] items-center justify-between border-t border-[#d5d9dd] bg-[#e2e4e8] px-[7px] text-[#b4b9be]">
          <svg width="6" height="6"><path d="M6 0v6L0 3z" fill="currentColor" /></svg>
          <svg width="6" height="6"><path d="M0 0v6l6-3z" fill="currentColor" /></svg>
        </div>
        <svg className="absolute -left-2 top-[18px]" width="16" height="9"><path d="M0 0h15.500L7.800 9z" fill="#1385d3" /></svg>
        <div className="absolute bottom-[21px] left-[-1px] top-[27px] border-l border-dotted border-[#1385d3]" />
        <div className="absolute bottom-[21px] left-[238px] top-[27px] w-[2px] bg-[#bcc1c5]" />
        <span className="absolute left-[246px] top-[27px] text-[11px] text-[#bcc1c5]">End</span>
      </div>
      <div className="mb-[21px] flex w-[21px] shrink-0 flex-col items-center justify-between border-x border-[#cfd3d8] bg-[#e2e4e8] py-[7px] text-[#b4b9be]">
        <svg width="6" height="7"><path d="M0 7h6L3 0z" fill="currentColor" /></svg>
        <svg width="6" height="7"><path d="M0 0h6L3 7z" fill="currentColor" /></svg>
      </div>
    </div>
  </section>
);

/* ---------- right panel ---------- */

const tool = 'flex size-7 items-center justify-center border';
const toolOn = 'border-[#c3c9ce] bg-white';
const toolOff = 'border-[#b9bec2] bg-[#f0f2f4]';

const TriggerItem = ({ title, target }: { title: string; target: string }) => (
  <>
    <h4 className="flex h-7 items-center border-b border-[#e4e7ea] pl-2 text-[11px] font-bold text-[#566166]">
      <Arrow className="mr-[19px] text-[#aab0b4]" />
      {title}
    </h4>
    <div className="h-[50px] border-b border-[#e4e7ea] pl-[35px] pt-1 text-[11px] leading-5 text-[#5b666b]">
      <p>Jump to slide <a href="#" className="text-[#26749c]">{target} slide</a></p>
      <p className="pl-[15px]">When the <a href="#" className="text-[#3f4d14]">user clicks or swipes</a> <a href="#" className="text-[#26749c]">{target}</a></p>
    </div>
  </>
);

const SidePanel = () => (
  <aside className="mr-[3px] flex w-[355px] shrink-0 flex-col border-l border-[#c9ced3] bg-white text-[#5b666b]">
    <div className="flex h-10 shrink-0 bg-[#e6ebef] text-[13px]">
      <button className="flex w-[67px] items-center gap-[5px] bg-[#eff3f7] pl-[9px] pt-px text-[#1385d3]">
        <svg width="13" height="13" viewBox="0 0 13 13" fill="none" stroke="currentColor" strokeWidth="1.200"><path d="M7.500 2.500Q1 2.500 1 5t5.500 2.500T12 6M1 8q1 2 5.500 2T12 8M1 10.500q1 2 5.500 2t5.500-2" /><path d="M10.500 0v4M8.500 2h4" /></svg>
        Slide
      </button>
      <button className="flex w-[112px] items-center gap-[4px] border-x border-b border-[#d5dade] pl-[8px] pt-px">
        <svg width="13" height="13" viewBox="0 0 13 13" fill="none" stroke="currentColor" strokeWidth="1.200"><path d="M5 2.500q.8 3 4 4-3.200 1-4 4-.8-3-4-4 3.200-1 4-4zM10.500 0v3.500M8.800 1.800h3.500M10.500 9v3.500M8.800 10.800h3.500" /></svg>
        AI Assistant
      </button>
      <div className="flex-1 border-b border-[#d5dade]" />
    </div>
    <section className="h-[81px] shrink-0 border-b border-[#d5dade] bg-[#eff3f7] pl-[21px] pr-[16px]">
      <div className="flex h-10 items-center pr-[3px] text-[#aab0b4]">
        <h2 className="mr-auto text-[15px] text-[#5b666b]">Triggers</h2>
        <Arrow />
        <button aria-label="Undock triggers" className="ml-3"><Undock /></button>
      </div>
      <div className="flex items-center gap-[2px]">
        <button aria-label="New trigger" className={clsx(tool, toolOn)}><Page /></button>
        <button aria-label="Edit trigger" className={clsx(tool, toolOff)}>
          <svg width="15" height="15" viewBox="0 0 15 15" fill="none" stroke="#b4b9bc"><path d="M.5 1.500h10v12H.5zM2.500 4.500h6M2.500 7.500h5M2.500 10.500h3" /><path d="M6 10l.5-2.500L12 2l2 2-5.500 5.500z" fill="#dfe2e4" stroke="#858c90" /></svg>
        </button>
        <button aria-label="Copy trigger" className={clsx(tool, toolOff)}>
          <svg width="17" height="17" viewBox="0 0 17 17" fill="#f7f8f9" stroke="#adb2b5"><path d="M.8 12.500V.8h6l3 2.500v9z" /><path d="M6 3.500h6l4 4V16H6z" /><path d="M12 3.500v4h4" /></svg>
        </button>
        <button aria-label="Paste trigger" className={clsx(tool, toolOff)}>
          <svg width="17" height="17" viewBox="0 0 17 17" fill="#f7f8f9" stroke="#adb2b5"><path d="M1 2.500h10v11H1zM4 1h4v3H4z" /><path d="M7 6.500h5.500L16 10v6H7z" /><path d="M12.500 6.500V10H16" /></svg>
        </button>
        <button aria-label="Delete trigger" className={clsx(tool, toolOff)}><Trash /></button>
        <div className="flex size-7 flex-col divide-y divide-[#b9bec2] border border-[#b9bec2] bg-[#f0f2f4] text-[#adb2b5]">
          <button aria-label="Move up" className="flex flex-1 items-center justify-center"><Arrow className="rotate-180" /></button>
          <button aria-label="Move down" className="flex flex-1 items-center justify-center"><Arrow /></button>
        </div>
        <label className="ml-auto mr-2 flex items-center gap-2 text-[12px]">
          <input type="checkbox" className="size-[18px] appearance-none border border-[#c3c9ce] bg-white" />
          <span><u>G</u>roup</span>
        </label>
        <button aria-label="Variables" className={clsx(tool, toolOn)}>
          <svg width="17" height="16" viewBox="0 0 17 16"><path d="M.8.800h15.500v14.500H.8z" fill="#fff" stroke="#6b7478" strokeWidth="1.200" /><path d="M0 0h17v4.500H0z" fill="#5d686e" /><path d="M5 6q-2.500 3.500 0 7M12 6q2.500 3.500 0 7M6.500 7.500l4 4.500M10.500 7.500l-4 4.500" fill="none" stroke="#6f93cf" strokeWidth="1.200" /></svg>
        </button>
      </div>
    </section>
    <section className="ml-1 flex-1">
      <h3 className="flex h-[30px] items-center justify-between border-b border-[#d5dade] bg-[#eef3f6] pl-2 pr-[12px] text-[12px] font-semibold">
        Player Triggers
        <svg width="10" height="13" viewBox="0 0 10 13" fill="#aab0b4"><path d="M1 0h8L5 4.500zM0 6h10v1H0zM1 13h8L5 8.500z" /></svg>
      </h3>
      <TriggerItem title="Next Button / Swipe Next" target="next" />
      <TriggerItem title="Previous Button / Swipe Previous" target="previous" />
    </section>
    <section className="flex h-[258px] shrink-0 flex-col">
      <div className="flex h-[42px] items-center border-y border-[#d5dade] bg-[#eff3f7] pl-[21px] pr-[19px] text-[#aab0b4]">
        <h2 className="mr-auto text-[15px] text-[#5b666b]">Slide Layers</h2>
        <Arrow />
        <button aria-label="Undock layers" className="ml-3"><Undock /></button>
      </div>
      <div className="ml-1 flex-1" />
      <div className="ml-1 border-y border-[#d5dade] py-[3px] pr-[2px]">
        <button className="flex h-8 w-full items-center bg-[#1385d3] pl-[18px] pr-[14px] text-[12px] text-white">
          <SlideThumb className="h-[21px] w-[30px]" />
          <span className="ml-[14px] mr-auto text-[11px]">Intro Slide</span>
          <em className="mr-3">(Base Layer)</em>
          <Eye color="#fff" pupil="#1385d3" />
        </button>
      </div>
      <div className="ml-1 flex h-[48px] items-center gap-[2px] bg-[#eff3f7] pl-[17px] pr-2">
        <button aria-label="New layer" className={clsx(tool, toolOn)}><Page /></button>
        <button aria-label="Duplicate layer" className={clsx(tool, toolOn)}>
          <svg width="17" height="17" viewBox="0 0 17 17" fill="#fff" stroke="#6b7478"><path d="M8 1h8v11H6V4z" /><path d="M1 9l4-4h8v11H1z" /><path d="M5 9l2 3 7-7v5l-3 5H5z" fill="#62a545" stroke="#45822c" /></svg>
        </button>
        <button aria-label="Delete layer" className={clsx(tool, toolOff)}><Trash /></button>
        <label className="ml-2 flex items-center gap-2 text-[13px]">
          <span className="relative flex">
            <input type="checkbox" defaultChecked className="size-[18px] appearance-none border border-[#c3c9ce] bg-white" />
            <svg className="pointer-events-none absolute left-[3px] top-1" width="12" height="10" fill="none" stroke="#1385d3" strokeWidth="2"><path d="M1 5l3.500 3.500L11 1" /></svg>
          </span>
          Dim
        </label>
        <button aria-label="Layer properties" className={clsx(tool, toolOn, 'ml-auto')}><Cog color="#aab0b4" size={14} /></button>
      </div>
    </section>
  </aside>
);

const StatusBar = () => (
  <footer className="flex h-8 shrink-0 items-center bg-[#38353a] pl-[10px] pr-2 pb-1 text-[11px] text-[#b4b4b8]">
    <span>Slide 1 of 1</span>
    <span className="ml-[17px]">720 × 540</span>
    <span className="ml-[17px]">“Clean”</span>
    <button className="ml-[17px] flex items-center gap-1">
      <svg width="14" height="14" viewBox="0 0 14 14" fill="none" stroke="#e6e6e8"><circle cx="7" cy="7" r="6.300" strokeWidth="1.300" /><path d="M7 3v5M7 9.500V11" strokeWidth="2" /></svg>
      2 Accessibility Issues
    </button>
    <div className="ml-auto flex items-center">
      <button aria-label="Story view"><svg width="12" height="11" fill="#c6c6ca"><path d="M0 0h5v4.500H0zM7 0h5v4.500H7zM0 6h5v4.500H0zM7 6h5v4.500H7z" /></svg></button>
      <button aria-label="Slide view" className="ml-[7px] flex h-[22px] w-6 items-center justify-center bg-[#2b292d]">
        <svg width="11" height="11" fill="none" stroke="#c6c6ca"><path d="M.5.500h10v10H.5z" /><path d="M1.500 .5v10M2.500 .5v10" /><path d="M5.500 2.500h3v3h-3zM5 8.500h4" /></svg>
      </button>
      <button aria-label="Slide show" className="ml-[7px]"><svg width="12" height="11" fill="none" stroke="#c6c6ca"><path d="M0 1h12" strokeWidth="2" /><path d="M1.500 1v4.500h9V1M6 5.500V10M3 10.500h6M4 3.500h4" /></svg></button>
      <span className="ml-[9px]">66%</span>
      <button aria-label="Zoom out" className="ml-[10px]"><svg width="8" height="8"><path d="M0 3h8v2H0z" fill="#b4b4b8" /></svg></button>
      <svg className="ml-1" width="100" height="10"><path d="M0 5.500h100" stroke="#e6e6e8" /><path d="M51.500 1v8" stroke="#e6e6e8" /><circle cx="32" cy="5" r="3" fill="#38353a" stroke="#dcdce0" strokeWidth="2" /></svg>
      <button aria-label="Zoom in" className="ml-[5px]"><svg width="8" height="8"><path d="M0 3h8v2H0zM3 0h2v8H3z" fill="#b4b4b8" /></svg></button>
      <button aria-label="Fit" className="ml-2"><svg width="14" height="14" fill="none" stroke="#c6c6ca"><path d="M.5.500h13v13H.5z" /><path d="M7 2v3.500M7 8.500V12M2 7h3.500M8.500 7H12" /><path d="M5.500 3.500L7 2l1.500 1.500M5.500 10.500L7 12l1.500-1.500M3.500 5.500L2 7l1.500 1.500M10.500 5.500L12 7l-1.500 1.500" /></svg></button>
    </div>
  </footer>
);

export default function App() {
  return (
    <div className="flex h-screen flex-col overflow-hidden bg-[#eff3f7] font-['Noto_Sans','Open_Sans',sans-serif]">
      <svg width="0" height="0" className="absolute">
        <defs>
          <linearGradient id="aiGrad" x1="0" x2="1"><stop stopColor="#8a20ee" /><stop offset="1" stopColor="#3d4cf4" /></linearGradient>
          <linearGradient id="aiGradLine" x1="0" y1="1" x2="1" y2="0"><stop stopColor="#a02af2" /><stop offset="1" stopColor="#3f9df5" /></linearGradient>
        </defs>
      </svg>
      <TitleBar />
      <MenuBar />
      <div className="bg-white"><Ribbon /></div>
      <DocTabs />
      <div className="flex min-h-0 flex-1">
        <Scenes />
        <div className="flex min-w-0 flex-1 flex-col">
          <Canvas />
          <Timeline />
        </div>
        <SidePanel />
      </div>
      <StatusBar />
    </div>
  );
}
